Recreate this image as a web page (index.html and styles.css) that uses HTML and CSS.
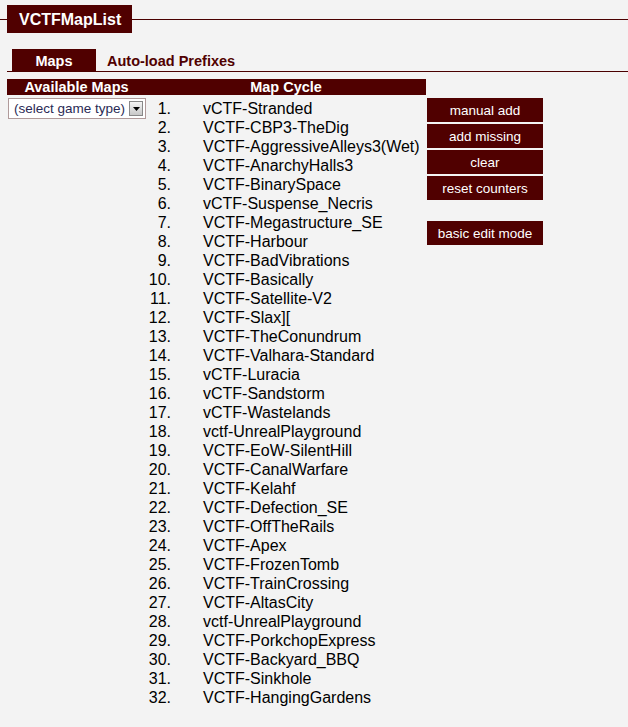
FILE: index.html
```html
<!DOCTYPE html>
<html>
<head>
<meta charset="utf-8">
<link rel="stylesheet" href="styles.css">
</head>
<body>
<div class="titlebar">
  <div class="line line-left"></div>
  <div class="title">VCTFMapList</div>
  <div class="line"></div>
</div>
<div class="tabs">
  <div class="tab active">Maps</div>
  <div class="tab">Auto-load Prefixes</div>
</div>
<div class="panel">
  <div class="heads">
    <div class="head head-left">Available Maps</div>
    <div class="head head-mid">Map Cycle</div>
  </div>
  <div class="content">
    <div class="left">
      <div class="select"><span class="sel-text">(select game type)</span><span class="sel-btn"><svg width="7" height="4" viewBox="0 0 7 4"><path d="M0 0H7L3.5 4Z" fill="#000"/></svg></span></div>
    </div>
    <div class="cycle">
      <div class="n">1.</div><div class="m">vCTF-Stranded</div>
      <div class="n">2.</div><div class="m">VCTF-CBP3-TheDig</div>
      <div class="n">3.</div><div class="m">VCTF-AggressiveAlleys3(Wet)</div>
      <div class="n">4.</div><div class="m">VCTF-AnarchyHalls3</div>
      <div class="n">5.</div><div class="m">VCTF-BinarySpace</div>
      <div class="n">6.</div><div class="m">vCTF-Suspense_Necris</div>
      <div class="n">7.</div><div class="m">VCTF-Megastructure_SE</div>
      <div class="n">8.</div><div class="m">VCTF-Harbour</div>
      <div class="n">9.</div><div class="m">VCTF-BadVibrations</div>
      <div class="n">10.</div><div class="m">VCTF-Basically</div>
      <div class="n">11.</div><div class="m">VCTF-Satellite-V2</div>
      <div class="n">12.</div><div class="m">VCTF-Slax][</div>
      <div class="n">13.</div><div class="m">VCTF-TheConundrum</div>
      <div class="n">14.</div><div class="m">VCTF-Valhara-Standard</div>
      <div class="n">15.</div><div class="m">vCTF-Luracia</div>
      <div class="n">16.</div><div class="m">vCTF-Sandstorm</div>
      <div class="n">17.</div><div class="m">vCTF-Wastelands</div>
      <div class="n">18.</div><div class="m">vctf-UnrealPlayground</div>
      <div class="n">19.</div><div class="m">VCTF-EoW-SilentHill</div>
      <div class="n">20.</div><div class="m">VCTF-CanalWarfare</div>
      <div class="n">21.</div><div class="m">VCTF-Kelahf</div>
      <div class="n">22.</div><div class="m">VCTF-Defection_SE</div>
      <div class="n">23.</div><div class="m">VCTF-OffTheRails</div>
      <div class="n">24.</div><div class="m">VCTF-Apex</div>
      <div class="n">25.</div><div class="m">VCTF-FrozenTomb</div>
      <div class="n">26.</div><div class="m">VCTF-TrainCrossing</div>
      <div class="n">27.</div><div class="m">VCTF-AltasCity</div>
      <div class="n">28.</div><div class="m">vctf-UnrealPlayground</div>
      <div class="n">29.</div><div class="m">VCTF-PorkchopExpress</div>
      <div class="n">30.</div><div class="m">VCTF-Backyard_BBQ</div>
      <div class="n">31.</div><div class="m">VCTF-Sinkhole</div>
      <div class="n">32.</div><div class="m">VCTF-HangingGardens</div>
    </div>
    <div class="buttons">
      <div class="btn">manual add</div>
      <div class="btn">add missing</div>
      <div class="btn">clear</div>
      <div class="btn">reset counters</div>
      <div class="btn btn-sep">basic edit mode</div>
    </div>
  </div>
</div>
</body>
</html>
```
FILE: styles.css
```css
html, body {
  margin: 0;
  padding: 0;
  background: #f3f3f3;
  font-family: "Liberation Sans", Arial, sans-serif;
}
.titlebar {
  display: flex;
  align-items: center;
  padding-top: 5px;
}
.line {
  flex: 1;
  height: 1px;
  background: #4a0000;
}
.line-left {
  flex: 0 0 7px;
}
.title {
  background: #500000;
  color: #fff;
  font-weight: bold;
  font-size: 16px;
  height: 28px;
  line-height: 29px;
  padding: 0 11px 0 12px;
}
.tabs {
  display: flex;
  align-items: flex-end;
  margin: 16px 0 0 7px;
  border-bottom: 1px solid #4a0000;
  height: 22px;
}
.tab {
  font-size: 14.5px;
  font-weight: bold;
  color: #500000;
  height: 22px;
  line-height: 24px;
}
.tab.active {
  background: #500000;
  color: #fff;
  width: 84px;
  text-align: center;
  margin-left: 5px;
  margin-right: 11px;
}
.panel {
  margin: 7px 0 0 7px;
}
.heads {
  display: flex;
  width: 419px;
  background: #500000;
  height: 16px;
  color: #fff;
  font-weight: bold;
  font-size: 14.5px;
  line-height: 16px;
}
.head {
  text-align: center;
}
.head-left {
  width: 139px;
}
.head-mid {
  width: 280px;
}
.content {
  display: flex;
  align-items: flex-start;
  margin-top: 3px;
}
.left {
  width: 139px;
}
.select {
  box-sizing: border-box;
  width: 138px;
  height: 21px;
  margin-left: 1px;
  border: 1px solid #b09a9a;
  background: #fff;
  display: flex;
  align-items: center;
  justify-content: space-between;
  padding: 0 2px 0 5px;
  color: #2a2a55;
  font-size: 13.5px;
}
.sel-btn {
  box-sizing: border-box;
  width: 14px;
  height: 15px;
  border: 1px solid #888;
  background: linear-gradient(#f4f4f4, #c8c8c8);
  display: flex;
  align-items: center;
  justify-content: center;
}
.cycle {
  width: 280px;
  margin-top: 1px;
  display: grid;
  grid-template-columns: 25px 1fr;
  column-gap: 32px;
  grid-auto-rows: 19px;
  font-size: 16px;
  line-height: 19px;
  color: #000;
}
.n {
  text-align: right;
}
.m {
  white-space: nowrap;
}
.buttons {
  margin-left: 1px;
  width: 116px;
  display: flex;
  flex-direction: column;
  gap: 2px;
}
.btn {
  background: #500000;
  color: #fff;
  height: 24px;
  line-height: 25px;
  text-align: center;
  font-size: 13.5px;
}
.btn-sep {
  margin-top: 19px;
}
```
